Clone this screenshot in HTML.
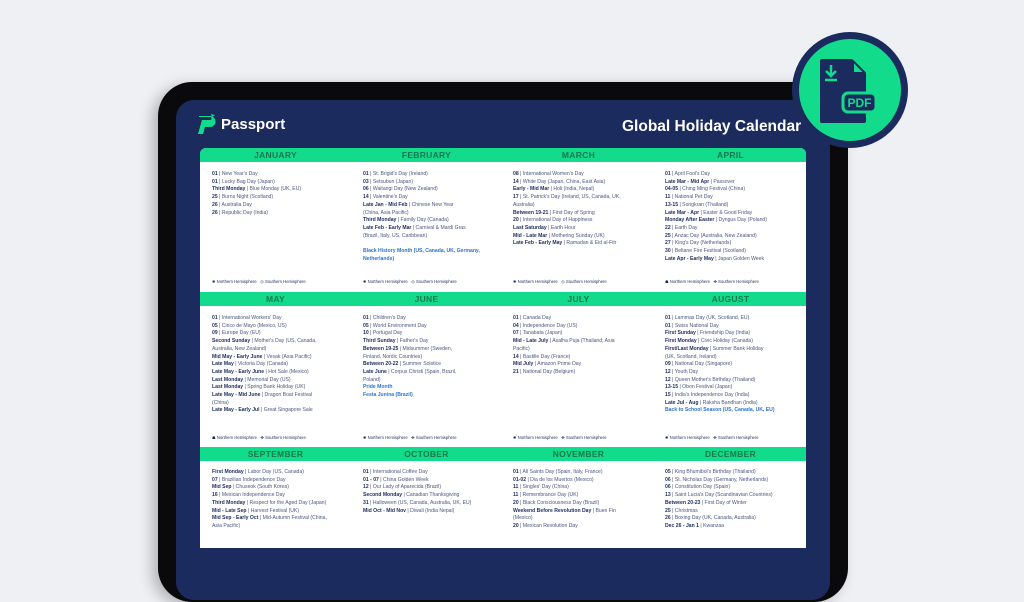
<!DOCTYPE html>
<html><head><meta charset="utf-8"><style>
*{margin:0;padding:0;box-sizing:border-box}
body{width:1024px;height:538px;overflow:hidden;background:#eef0f3;font-family:"Liberation Sans",sans-serif;position:relative}
.tab{position:absolute;left:158px;top:82px;width:690px;height:520px;background:#0a0a0c;border-radius:34px;box-shadow:-6px 4px 14px rgba(0,0,0,.25)}
.scr{position:absolute;left:176px;top:100px;width:654px;height:500px;background:#1c2b5e;border-radius:18px}
.panel{position:absolute;left:200px;top:148px;width:606px;height:400px;background:#fff;border-radius:6px 6px 0 0}
.bar{position:absolute;left:200px;width:606px;height:14px;background:#12dc8c}
.mh{position:absolute;width:151px;text-align:center;font-weight:bold;font-size:8.5px;letter-spacing:.3px;color:#17784c;line-height:14px}
.c{position:absolute;width:140px;font-size:5.1px;line-height:7.7px;color:#4a5680}
.c b{color:#1c2b5e}
.c i{color:#2b74d0;font-style:normal;font-weight:bold}
.lg{position:absolute;font-size:4.2px;color:#1c2b5e;white-space:nowrap}
.logo{position:absolute;left:221px;top:116px;color:#fff;font-size:15px;font-weight:bold}
.title{position:absolute;left:622px;top:118px;color:#fff;font-size:15.5px;font-weight:bold}
.circ{position:absolute;left:792px;top:32px;width:116px;height:116px;border-radius:50%;background:#1c2b5e}
.circ2{position:absolute;left:799px;top:39px;width:102px;height:102px;border-radius:50%;background:#12dc8c}
</style></head><body>
<div class="tab"></div>
<div class="scr"></div>
<svg style="position:absolute;left:196px;top:113px" width="22" height="22" viewBox="0 0 22 22"><path d="M3 3h11a5.5 5.5 0 0 1 0 11H9l-2 7H2l4-14h8a1.5 1.5 0 0 0 0-3H3z" fill="#12dc8c"/><path d="M15 1l4 1-3 2z" fill="#12dc8c"/></svg>
<div class="logo">Passport</div>
<div class="title">Global Holiday Calendar</div>
<div class="panel"></div>
<div class="bar" style="top:148px;border-radius:6px 6px 0 0"></div>
<div class="bar" style="top:292px"></div>
<div class="bar" style="top:447px"></div>

<div class="mh" style="left:200px;top:148px">JANUARY</div>
<div class="mh" style="left:351px;top:148px">FEBRUARY</div>
<div class="mh" style="left:503px;top:148px">MARCH</div>
<div class="mh" style="left:655px;top:148px">APRIL</div>
<div class="mh" style="left:200px;top:292px">MAY</div>
<div class="mh" style="left:351px;top:292px">JUNE</div>
<div class="mh" style="left:503px;top:292px">JULY</div>
<div class="mh" style="left:655px;top:292px">AUGUST</div>
<div class="mh" style="left:200px;top:447px">SEPTEMBER</div>
<div class="mh" style="left:351px;top:447px">OCTOBER</div>
<div class="mh" style="left:503px;top:447px">NOVEMBER</div>
<div class="mh" style="left:655px;top:447px">DECEMBER</div>

<div class="c" style="left:212px;top:171px"><b>01</b> | New Year's Day<br><b>01</b> | Lucky Bag Day (Japan)<br><b>Third Monday</b> | Blue Monday (UK, EU)<br><b>25</b> | Burns Night (Scotland)<br><b>26</b> | Australia Day<br><b>26</b> | Republic Day (India)</div>
<div class="c" style="left:363px;top:171px"><b>01</b> | St. Brigid's Day (Ireland)<br><b>03</b> | Setsubun (Japan)<br><b>06</b> | Waitangi Day (New Zealand)<br><b>14</b> | Valentine's Day<br><b>Late Jan - Mid Feb</b> | Chinese New Year<br>(China, Asia Pacific)<br><b>Third Monday</b> | Family Day (Canada)<br><b>Late Feb - Early Mar</b> | Carnival &amp; Mardi Gras<br>(Brazil, Italy, US, Caribbean)<br><br><i>Black History Month (US, Canada, UK, Germany, Netherlands)</i></div>
<div class="c" style="left:513px;top:171px"><b>08</b> | International Women's Day<br><b>14</b> | White Day (Japan, China, East Asia)<br><b>Early - Mid Mar</b> | Holi (India, Nepal)<br><b>17</b> | St. Patrick's Day (Ireland, US, Canada, UK,<br>Australia)<br><b>Between 19-21</b> | First Day of Spring<br><b>20</b> | International Day of Happiness<br><b>Last Saturday</b> | Earth Hour<br><b>Mid - Late Mar</b> | Mothering Sunday (UK)<br><b>Late Feb - Early May</b> | Ramadan &amp; Eid al-Fitr</div>
<div class="c" style="left:665px;top:171px"><b>01</b> | April Fool's Day<br><b>Late Mar - Mid Apr</b> | Passover<br><b>04-05</b> | Ching Ming Festival (China)<br><b>11</b> | National Pet Day<br><b>13-15</b> | Songkran (Thailand)<br><b>Late Mar - Apr</b> | Easter &amp; Good Friday<br><b>Monday After Easter</b> | Dyngus Day (Poland)<br><b>22</b> | Earth Day<br><b>25</b> | Anzac Day (Australia, New Zealand)<br><b>27</b> | King's Day (Netherlands)<br><b>30</b> | Beltane Fire Festival (Scotland)<br><b>Late Apr - Early May</b> | Japan Golden Week</div>

<div class="lg" style="left:212px;top:279px">✺ Northern Hemisphere &nbsp; ◎ Southern Hemisphere</div>
<div class="lg" style="left:363px;top:279px">✺ Northern Hemisphere &nbsp; ◎ Southern Hemisphere</div>
<div class="lg" style="left:513px;top:279px">✺ Northern Hemisphere &nbsp; ◎ Southern Hemisphere</div>
<div class="lg" style="left:665px;top:279px">☗ Northern Hemisphere &nbsp; ✤ Southern Hemisphere</div>

<div class="c" style="left:212px;top:315px"><b>01</b> | International Workers' Day<br><b>05</b> | Cinco de Mayo (Mexico, US)<br><b>09</b> | Europe Day (EU)<br><b>Second Sunday</b> | Mother's Day (US, Canada,<br>Australia, New Zealand)<br><b>Mid May - Early June</b> | Vesak (Asia Pacific)<br><b>Late May</b> | Victoria Day (Canada)<br><b>Late May - Early June</b> | Hot Sale (Mexico)<br><b>Last Monday</b> | Memorial Day (US)<br><b>Last Monday</b> | Spring Bank Holiday (UK)<br><b>Late May - Mid June</b> | Dragon Boat Festival<br>(China)<br><b>Late May - Early Jul</b> | Great Singapore Sale</div>
<div class="c" style="left:363px;top:315px"><b>01</b> | Children's Day<br><b>05</b> | World Environment Day<br><b>10</b> | Portugal Day<br><b>Third Sunday</b> | Father's Day<br><b>Between 19-25</b> | Midsummer (Sweden,<br>Finland, Nordic Countries)<br><b>Between 20-22</b> | Summer Solstice<br><b>Late June</b> | Corpus Christi (Spain, Brazil,<br>Poland)<br><i>Pride Month</i><br><i>Festa Junina (Brazil)</i></div>
<div class="c" style="left:513px;top:315px"><b>01</b> | Canada Day<br><b>04</b> | Independence Day (US)<br><b>07</b> | Tanabata (Japan)<br><b>Mid - Late July</b> | Asalha Puja (Thailand, Asia<br>Pacific)<br><b>14</b> | Bastille Day (France)<br><b>Mid July</b> | Amazon Prime Day<br><b>21</b> | National Day (Belgium)</div>
<div class="c" style="left:665px;top:315px"><b>01</b> | Lammas Day (UK, Scotland, EU)<br><b>01</b> | Swiss National Day<br><b>First Sunday</b> | Friendship Day (India)<br><b>First Monday</b> | Civic Holiday (Canada)<br><b>First/Last Monday</b> | Summer Bank Holiday<br>(UK, Scotland, Ireland)<br><b>09</b> | National Day (Singapore)<br><b>12</b> | Youth Day<br><b>12</b> | Queen Mother's Birthday (Thailand)<br><b>13-15</b> | Obon Festival (Japan)<br><b>15</b> | India's Independence Day (India)<br><b>Late Jul - Aug</b> | Raksha Bandhan (India)<br><i>Back to School Season (US, Canada, UK, EU)</i></div>

<div class="lg" style="left:212px;top:435px">☗ Northern Hemisphere &nbsp; ✤ Southern Hemisphere</div>
<div class="lg" style="left:363px;top:435px">✺ Northern Hemisphere &nbsp; ✤ Southern Hemisphere</div>
<div class="lg" style="left:513px;top:435px">✺ Northern Hemisphere &nbsp; ✤ Southern Hemisphere</div>
<div class="lg" style="left:665px;top:435px">✺ Northern Hemisphere &nbsp; ✤ Southern Hemisphere</div>

<div class="c" style="left:212px;top:469px"><b>First Monday</b> | Labor Day (US, Canada)<br><b>07</b> | Brazilian Independence Day<br><b>Mid Sep</b> | Chuseok (South Korea)<br><b>16</b> | Mexican Independence Day<br><b>Third Monday</b> | Respect for the Aged Day (Japan)<br><b>Mid - Late Sep</b> | Harvest Festival (UK)<br><b>Mid Sep - Early Oct</b> | Mid-Autumn Festival (China,<br>Asia Pacific)</div>
<div class="c" style="left:363px;top:469px"><b>01</b> | International Coffee Day<br><b>01 - 07</b> | China Golden Week<br><b>12</b> | Our Lady of Aparecida (Brazil)<br><b>Second Monday</b> | Canadian Thanksgiving<br><b>31</b> | Halloween (US, Canada, Australia, UK, EU)<br><b>Mid Oct - Mid Nov</b> | Diwali (India Nepal)</div>
<div class="c" style="left:513px;top:469px"><b>01</b> | All Saints Day (Spain, Italy, France)<br><b>01-02</b> | Dia de los Muertos (Mexico)<br><b>11</b> | Singles' Day (China)<br><b>11</b> | Remembrance Day (UK)<br><b>20</b> | Black Consciousness Day (Brazil)<br><b>Weekend Before Revolution Day</b> | Buen Fin<br>(Mexico)<br><b>20</b> | Mexican Revolution Day</div>
<div class="c" style="left:665px;top:469px"><b>05</b> | King Bhumibol's Birthday (Thailand)<br><b>06</b> | St. Nicholas Day (Germany, Netherlands)<br><b>06</b> | Constitution Day (Spain)<br><b>13</b> | Saint Lucia's Day (Scandinavian Countries)<br><b>Between 20-23</b> | First Day of Winter<br><b>25</b> | Christmas<br><b>26</b> | Boxing Day (UK, Canada, Australia)<br><b>Dec 26 - Jan 1</b> | Kwanzaa</div>

<div class="circ"></div>
<div class="circ2"></div>
<svg style="position:absolute;left:816px;top:56px" width="62" height="70" viewBox="0 0 62 70">
<path d="M6 3h30l14 14v48a2 2 0 0 1-2 2H6a2 2 0 0 1-2-2V5a2 2 0 0 1 2-2z" fill="#1c2b5e"/>
<path d="M37 5v12h12z" fill="#12dc8c" stroke="#1c2b5e" stroke-width="2" stroke-linejoin="round"/>
<path d="M15 9v11M10 15l5 5 5-5M9 24h12" fill="none" stroke="#12dc8c" stroke-width="2.5"/>
<rect x="27" y="37" width="33" height="19" rx="5" fill="#1c2b5e" stroke="#12dc8c" stroke-width="3"/>
<text x="43.5" y="51" text-anchor="middle" font-family="Liberation Sans" font-weight="bold" font-size="12" fill="#12dc8c">PDF</text>
</svg>
</body></html>
